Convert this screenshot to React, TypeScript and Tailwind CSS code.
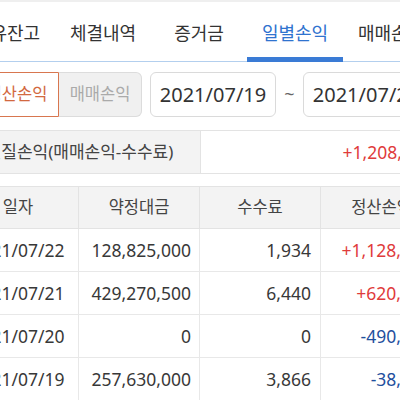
import React from 'react';

const tabs = ['보유잔고', '체결내역', '증거금', '일별손익', '매매손익'];

const rows = [
  { date: '2021/07/22', amount: '128,825,000', fee: '1,934', pnl: '+1,128,434', up: true },
  { date: '2021/07/21', amount: '429,270,500', fee: '6,440', pnl: '+620,560', up: true },
  { date: '2021/07/20', amount: '0', fee: '0', pnl: '-490,000', up: false },
  { date: '2021/07/19', amount: '257,630,000', fee: '3,866', pnl: '-38,400', up: false },
];

const App: React.FC = () => {
  return (
    <div className="w-[400px] h-[400px] overflow-hidden bg-white font-['Noto_Sans','Noto_Sans_CJK_KR',sans-serif]">
      <div className="-ml-[42px] w-[484px]">
        {/* tabs */}
        <div className="flex h-[62px] pl-px border-t-2 border-[#efefef] border-b border-b-[#b3cfee]">
          {tabs.map((t, i) => (
            <div
              key={t}
              className={`relative w-[96px] shrink-0 flex items-center justify-center pt-1 text-[18px] ${
                i === 3 ? 'text-[#2f73cf]' : 'text-[#333]'
              }`}
            >
              {t}
              {i === 3 && <div className="absolute left-0 right-0 -bottom-px h-[5px] bg-[#3a7bd5]" />}
            </div>
          ))}
        </div>

        {/* filter + period */}
        <div className="flex items-center h-[45px] mt-[10px] pl-[17px]">
          <button className="w-[84px] h-full rounded-l-md border border-[#d8764f] text-[#d2693f] text-[16.5px] bg-white">
            정산손익
          </button>
          <button className="w-[83px] h-full rounded-r-md border border-l-0 border-[#dcdcdc] bg-[#f0f0f0] text-[#aaaaaa] text-[16.5px]">
            매매손익
          </button>
          <div className="ml-[8px] w-[126px] h-full rounded-md border border-[#dadada] flex items-center justify-center text-[20px] text-[#333]">
            2021/07/19
          </div>
          <div className="w-[27px] text-center text-[18px] text-[#666]">~</div>
          <div className="w-[126px] h-full rounded-md border border-[#dadada] flex items-center justify-center text-[20px] text-[#333]">
            2021/07/22
          </div>
        </div>

        {/* summary */}
        <div className="grid grid-cols-[242px_242px] h-[44px] mt-[13px] border border-[#e3e3e3]">
          <div className="flex items-center justify-center bg-[#f3f3f3] border-r border-[#e3e3e3] text-[17px] text-[#444]">
            실질손익(매매손익-수수료)
          </div>
          <div className="flex items-center justify-end pr-[11px] text-[17.5px] text-[#df3b3b]">+1,208,592</div>
        </div>

        {/* table */}
        <div className="mt-[12px] border-t border-[#e3e3e3]">
          <div className="grid grid-cols-[121px_121px_121px_121px] h-[42px] bg-[#f3f3f3] border-b border-[#e3e3e3] text-[16.5px] text-[#444]">
            {['일자', '약정대금', '수수료', '정산손익'].map((h, i) => (
              <div key={h} className={`flex items-center justify-center ${i < 3 ? 'border-r border-[#e3e3e3]' : ''}`}>
                {h}
              </div>
            ))}
          </div>
          {rows.map((r) => (
            <div key={r.date} className="grid grid-cols-[121px_121px_121px_121px] h-[43px] border-b border-[#e8e8e8] text-[17.5px] text-[#383838]">
              <div className="flex items-center justify-center border-r border-[#e8e8e8]">{r.date}</div>
              <div className="flex items-center justify-end pr-[8px] border-r border-[#e8e8e8]">{r.amount}</div>
              <div className="flex items-center justify-end pr-[9px] border-r border-[#e8e8e8]">{r.fee}</div>
              <div className={`flex items-center justify-end pr-[11px] ${r.up ? 'text-[#df3b3b]' : 'text-[#1f4f9e]'}`}>
                {r.pnl}
              </div>
            </div>
          ))}
        </div>
      </div>
    </div>
  );
};

export default App;
